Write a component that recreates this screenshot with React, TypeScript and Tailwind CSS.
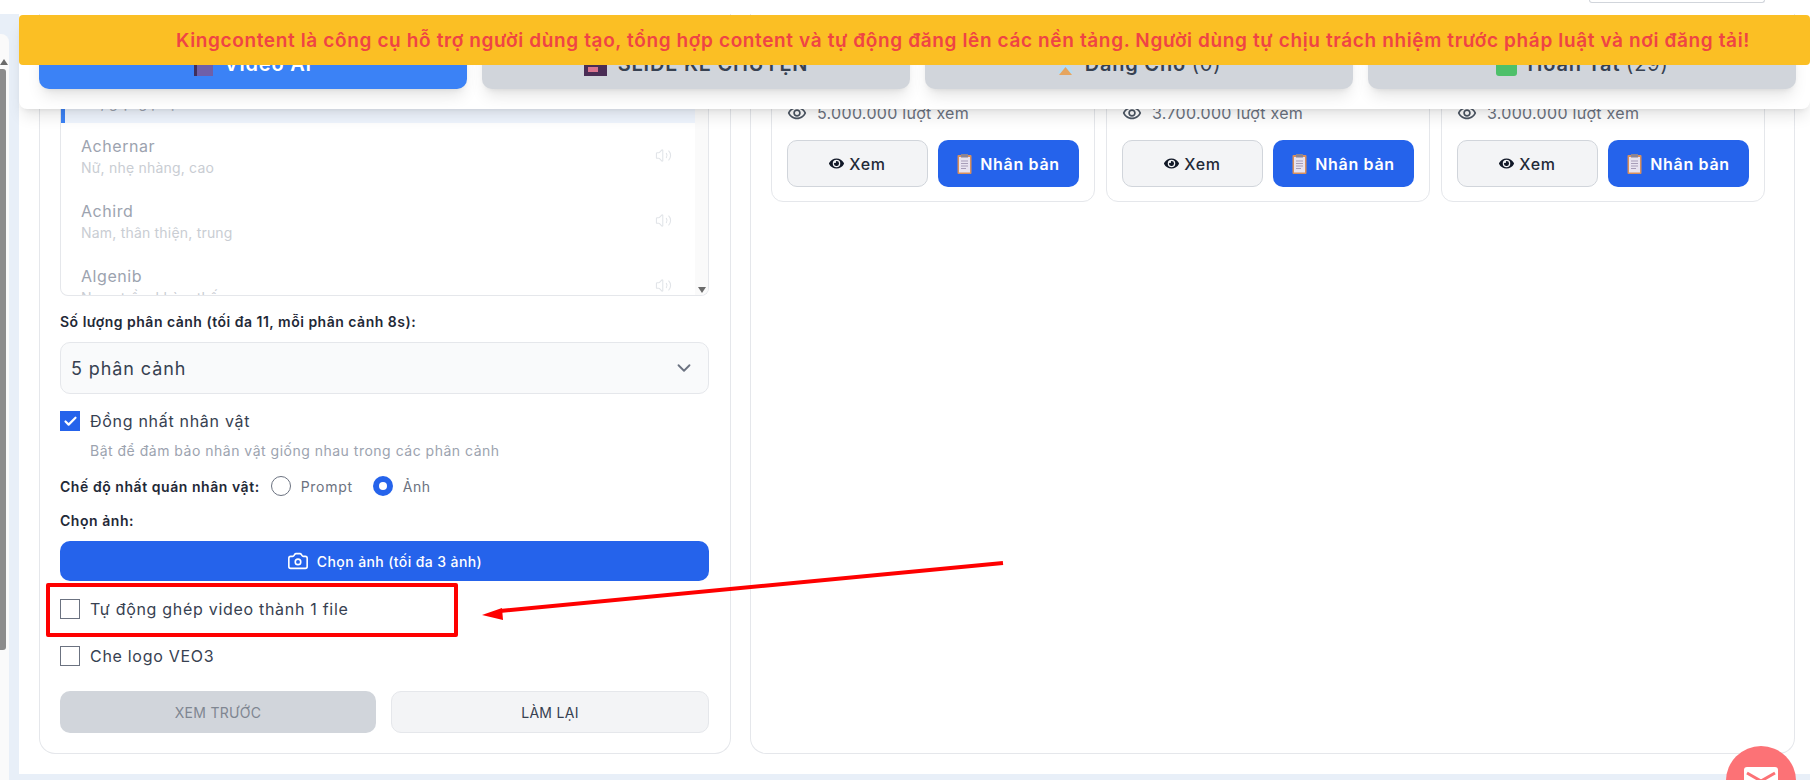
import React from "react";
import { Camera, Check, ChevronDown, Volume2 } from "lucide-react";
import { FaEye } from "react-icons/fa";
import { MdOutlineRemoveRedEye } from "react-icons/md";

const font = "font-['Inter','Liberation_Sans',sans-serif]";

function Clipboard() {
  return (
    <svg width="15" height="20" viewBox="0 0 15 20" className="shrink-0">
      <rect x="0.5" y="1" width="14" height="19" rx="1" fill="#d98f5c" />
      <rect x="2" y="3" width="11" height="15.5" fill="#e8e3f0" />
      <rect x="4" y="0" width="7" height="3.5" fill="#8b8494" />
      <path d="M4 7h7M4 9.5h7M4 12h7M4 14.5h5" stroke="#a79db8" strokeWidth="1" />
    </svg>
  );
}

function VideoCard({ views }: { views: string }) {
  return (
    <div className="h-[172px] rounded-[12px] border border-[#e5e7eb] bg-white px-[15px] pb-[14px] flex flex-col justify-end">
      <div className="flex items-center gap-[10px] h-[24px] text-[16px] tracking-[0.3px] text-[#6b7280]">
        <MdOutlineRemoveRedEye size={20} className="text-[#4b5563]" />
        <span>{views} lượt xem</span>
      </div>
      <div className="mt-[15px] grid grid-cols-2 gap-[10px]">
        <button className="h-[47px] rounded-[10px] border border-[#d1d5db] bg-[#f3f4f6] flex items-center justify-center gap-[5px] text-[16px] tracking-[0.7px] font-medium text-[#1f2937]">
          <FaEye size={15} className="text-[#111827]" />
          Xem
        </button>
        <button className="h-[47px] rounded-[10px] bg-[#2563eb] flex items-center justify-center gap-[8px] text-[16px] tracking-[0.7px] font-semibold text-white">
          <Clipboard />
          Nhân bản
        </button>
      </div>
    </div>
  );
}

function Voice({ name, desc }: { name: string; desc: string }) {
  return (
    <div className="h-[65px] shrink-0 pt-[11px] pl-[20px] pr-[23px] flex justify-between">
      <div>
        <div className="text-[16px] leading-[24px] text-[#9ca3af]">{name}</div>
        <div className="text-[14px] leading-[20px] tracking-[0.2px] text-[#c9cdd3]">{desc}</div>
      </div>
      <Volume2 size={17} strokeWidth={1.5} className="text-[#e1e4e8] mt-[13px]" />
    </div>
  );
}

function Box({ label, checked }: { label: string; checked?: boolean }) {
  return (
    <div className="flex items-center gap-[10px] h-[20px] text-[16px] tracking-[0.7px] text-[#374151]">
      {checked ? (
        <span className="w-[20px] h-[20px] bg-[#2563eb] flex items-center justify-center">
          <Check size={15} strokeWidth={3.5} className="text-white" />
        </span>
      ) : (
        <span className="w-[20px] h-[20px] border border-[#6b7280] bg-white" />
      )}
      <span>{label}</span>
    </div>
  );
}

function Tab({ bg, color, icon, children }: { bg: string; color: string; icon: React.ReactNode; children: React.ReactNode }) {
  return (
    <div className={`${bg} ${color} h-[50px] rounded-[10px] shadow-lg flex items-center justify-center gap-[11px] text-[20px] tracking-[0.8px] font-semibold`}>
      {icon}
      <span>{children}</span>
    </div>
  );
}

export default function App() {
  return (
    <div className={`${font} tracking-[0.55px] relative h-[780px] overflow-hidden bg-[#e8eff8] flex flex-col`}>
      <div className="h-[14px] shrink-0 bg-white flex justify-end pr-[45px]">
        <div className="w-[176px] h-[3px] rounded-b-[4px] border-x border-b border-[#d1d5db]" />
      </div>

      <div className="flex-1 flex min-h-0">
        <div className="w-[19px] shrink-0 flex flex-col pt-[20px]">
          <div className="flex-1 w-[9px] bg-[#fafafa] rounded-tr-[8px] pt-[24px]">
            <svg width="8" height="7" viewBox="0 0 8 7"><path d="M0 7 4 1l4 6z" fill="#6b6b6b" /></svg>
            <div className="w-[6px] h-[581px] mt-[4px] bg-[#8c8c8c] rounded-r-[3px]" />
          </div>
        </div>

        <div className="flex-1 min-w-0 mb-[6px] bg-white pl-[20px] pr-[15px] pb-[20px] flex gap-[19px]">
          <div className="w-[692px] shrink-0 rounded-b-[16px] border-x border-b border-[#e5e7eb] bg-white pt-[44px] pl-[20px] pr-[21px]">
            <div className="h-[238px] rounded-b-[8px] border border-[#e5e7eb] border-t-0 overflow-hidden flex">
              <div className="flex-1 flex flex-col">
                <div className="h-[65px] shrink-0 bg-[#eff5fe] border-l-[4px] border-[#3b82f6] pl-[16px] pt-[11px]">
                  <div className="text-[16px] leading-[24px] text-[#6b7280]">Achernar</div>
                  <div className="text-[14px] leading-[20px] tracking-[0.2px] text-[#9ca3af]">Nữ, giọng phụ nữ</div>
                </div>
                <Voice name="Achernar" desc="Nữ, nhẹ nhàng, cao" />
                <Voice name="Achird" desc="Nam, thân thiện, trung" />
                <Voice name="Algenib" desc="Nam, trầm khàn, thấp" />
              </div>
              <div className="w-[13px] bg-[#fafafa] flex flex-col justify-end items-center pb-[2px]">
                <svg width="8" height="6" viewBox="0 0 8 6"><path d="M0 0h8L4 6z" fill="#6b6b6b" /></svg>
              </div>
            </div>

            <div className="mt-[16px] text-[14px] leading-[20px] tracking-[0.5px] font-semibold text-[#1f2937]">
              Số lượng phân cảnh (tối đa 11, mỗi phân cảnh 8s):
            </div>
            <div className="mt-[10px] h-[52px] rounded-[10px] border border-[#e5e7eb] bg-[#f9fafb] pl-[10px] pr-[13px] flex items-center justify-between text-[18px] tracking-[0.9px] text-[#374151]">
              <span>5 phân cảnh</span>
              <ChevronDown size={22} className="text-[#6b7280]" />
            </div>

            <div className="mt-[17px]"><Box label="Đồng nhất nhân vật" checked /></div>
            <div className="mt-[10px] pl-[30px] text-[14px] leading-[20px] tracking-[0.5px] text-[#9ca3af]">
              Bật để đảm bảo nhân vật giống nhau trong các phân cảnh
            </div>

            <div className="mt-[15px] h-[20px] flex items-center text-[14px]">
              <span className="font-semibold text-[#1f2937]">Chế độ nhất quán nhân vật:</span>
              <span className="ml-[11px] w-[20px] h-[20px] rounded-full border border-[#6b7280] bg-white" />
              <span className="ml-[10px] tracking-[0.7px] text-[#6b7280]">Prompt</span>
              <span className="ml-[20px] w-[20px] h-[20px] rounded-full bg-[#2563eb] flex items-center justify-center">
                <span className="w-[8px] h-[8px] rounded-full bg-white" />
              </span>
              <span className="ml-[10px] text-[#6b7280]">Ảnh</span>
            </div>

            <div className="mt-[15px] text-[14px] leading-[20px] font-semibold text-[#1f2937]">Chọn ảnh:</div>
            <button className="mt-[10px] w-full h-[40px] rounded-[10px] bg-[#2563eb] flex items-center justify-center gap-[8px] text-[14px] tracking-[0.4px] font-medium text-white">
              <Camera size={22} strokeWidth={1.75} />
              Chọn ảnh (tối đa 3 ảnh)
            </button>

            <div className="mt-[18px]"><Box label="Tự động ghép video thành 1 file" /></div>
            <div className="mt-[27px]"><Box label="Che logo VEO3" /></div>

            <div className="mt-[25px] flex gap-[15px] text-[14px] tracking-[0.3px]">
              <button className="w-[316px] h-[42px] rounded-[10px] bg-[#d1d5db] text-[#7f8691]">XEM TRƯỚC</button>
              <button className="flex-1 h-[42px] rounded-[10px] border border-[#e5e7eb] bg-[#f3f4f6] text-[#374151]">LÀM LẠI</button>
            </div>
          </div>

          <div className="flex-1 min-w-0 rounded-b-[16px] border-x border-b border-[#e5e7eb] bg-white pt-[16px] pl-[20px] pr-[29px]">
            <div className="grid grid-cols-3 gap-[11px]">
              <VideoCard views="5.000.000" />
              <VideoCard views="3.700.000" />
              <VideoCard views="3.000.000" />
            </div>
          </div>
        </div>
      </div>

      {/* sticky header lying over the scrolled page */}
      <div className="absolute left-[19px] right-0 top-[15px] h-[94px] rounded-[8px] bg-white shadow-lg pl-[20px] pr-[14px] pt-[24px]">
        <div className="grid grid-cols-4 gap-[15px]">
          <Tab bg="bg-[#3b82f6]" color="text-white" icon={<svg width="19" height="24"><rect width="19" height="24" fill="#6f5fa8" /><rect width="3" height="24" fill="#3f2f5c" /></svg>}>Video AI</Tab>
          <Tab bg="bg-[#d1d5db]" color="text-[#374151]" icon={<svg width="23" height="24"><rect y="4" width="23" height="20" fill="#4a2d55" /><rect x="4" y="15" width="10" height="5" fill="#d9738e" /></svg>}>SLIDE KỂ CHUYỆN</Tab>
          <Tab bg="bg-[#d1d5db]" color="text-[#374151]" icon={<svg width="17" height="24"><path d="M8.500 6 16 21H1z" fill="#b9dcf0" /><path d="M8.500 15 15 23H2z" fill="#e6a55f" /></svg>}><>Đang Chờ <span className="font-normal">(0)</span></></Tab>
          <Tab bg="bg-[#d1d5db]" color="text-[#374151]" icon={<svg width="21" height="24"><rect width="21" height="24" rx="3" fill="#4ec06a" /></svg>}><>Hoàn Tất <span className="font-normal">(29)</span></></Tab>
        </div>
        <div className="absolute left-0 right-0 top-0 h-[50px] rounded-[4px] bg-[#fbbf24] flex items-center justify-end pr-[60px] pt-[2px] text-[19px] tracking-[0.63px] font-semibold text-[#ef4444] whitespace-nowrap">
          Kingcontent là công cụ hỗ trợ người dùng tạo, tổng hợp content và tự động đăng lên các nền tảng. Người dùng tự chịu trách nhiệm trước pháp luật và nơi đăng tải!
        </div>
      </div>

      {/* annotation */}
      <div className="absolute left-[46px] top-[583px] w-[412px] h-[54px] border-[4px] border-[#fe0000] rounded-[2px]" />
      <svg className="absolute left-[470px] top-[550px]" width="545" height="80" viewBox="0 0 545 80">
        <path d="M533 13 30 61" stroke="#fe0000" strokeWidth="4" fill="none" />
        <path d="M12 65 32 58 33 70z" fill="#fe0000" />
      </svg>

      {/* mail bubble */}
      <div className="absolute right-[14px] top-[746px] w-[70px] h-[70px] rounded-full bg-[#fc7276] flex justify-center pt-[21px]">
        <svg width="34" height="26" viewBox="0 0 34 26">
          <rect width="34" height="26" rx="3" fill="#fff" />
          <path d="M3 6 17 14 31 6" stroke="#fc7276" strokeWidth="3" fill="none" />
        </svg>
      </div>
    </div>
  );
}
